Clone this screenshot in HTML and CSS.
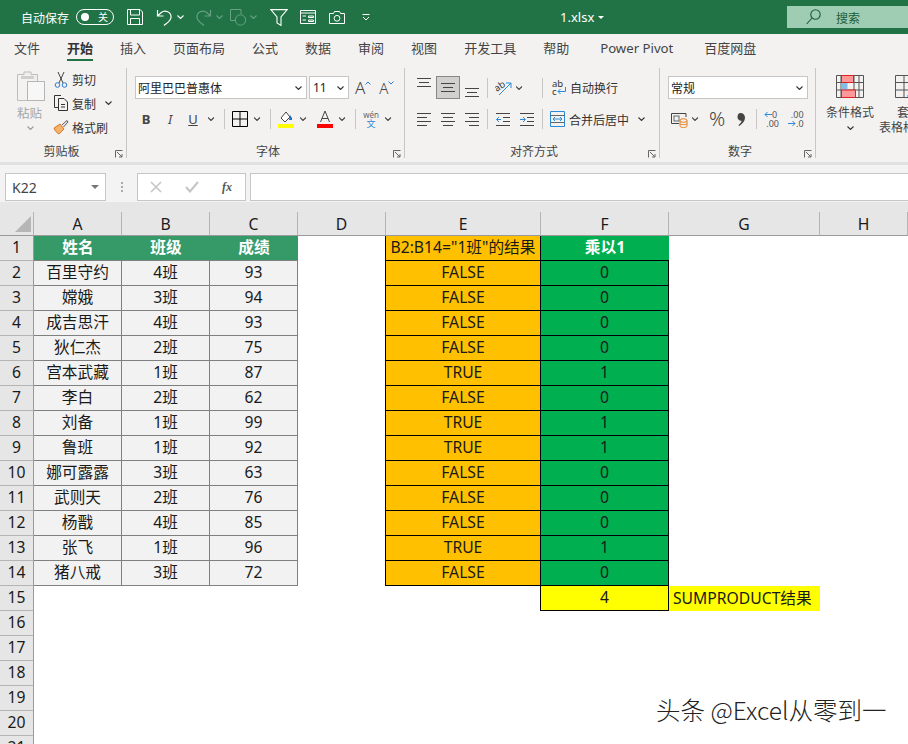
FILE: index.html
```html
<!DOCTYPE html>
<html lang="zh-CN">
<head>
<meta charset="utf-8">
<title>1.xlsx - Excel</title>
<link rel="stylesheet" href="styles.css">
</head>
<body>
<svg class="defs" width="0" height="0" aria-hidden="true">
  <symbol id="chev" viewBox="0 0 7 4"><path d="M.5.5 3.5 3.5 6.5.5" fill="none" stroke="currentColor" stroke-width="1.1"/></symbol>
  <symbol id="launch" viewBox="0 0 8 8"><path d="M.5 7.5V.5H7.5M2 2 7 7M7 4V7H4" fill="none" stroke="#666" stroke-width="1"/></symbol>
</svg>

<header class="titlebar">
  <span class="autosave">自动保存</span>
  <span class="toggle ml7"><i class="dot"></i><b>关</b></span>
  <svg class="ml13" width="16" height="16" viewBox="0 0 16 16" fill="none" stroke="#fff"><path d="M.5.5H13L15.5 3V15.5H.5ZM3.5.5V6H12.5V.5M3.5 15.5V9.5H12.5V15.5"/></svg>
  <svg class="ml13" width="16" height="18" viewBox="0 0 16 18" fill="none" stroke="#fff" stroke-width="1.2"><path d="M1.5 2V8H7.5M1.5 8 5 4.8C9 1.5 15.5 3.8 15 9.5 14.7 13 11 15 8 17.5"/></svg>
  <svg class="ml5 chev7 white"><use href="#chev"/></svg>
  <svg class="ml12" width="16" height="18" viewBox="0 0 16 18" fill="none" stroke="#67a083" stroke-width="1.2"><path d="M14.5 2V8H8.5M14.5 8 11 4.8C7 1.5.5 3.8 1 9.5 1.3 13 5 15 8 17.5"/></svg>
  <svg class="ml4 chev7 dim"><use href="#chev"/></svg>
  <svg class="ml7" width="16" height="17" viewBox="0 0 16 17" fill="none" stroke="#67a083"><path d="M5 11.5H.5V.5H11V5"/><circle cx="10.5" cy="11" r="5.2"/></svg>
  <svg class="ml4 chev7 dim"><use href="#chev"/></svg>
  <svg class="ml13" width="18" height="17" viewBox="0 0 18 17" fill="none" stroke="#fff" stroke-width="1.1"><path d="M.8.6H17.2L11 8V16.4L7 14V8Z"/></svg>
  <svg class="ml12" width="16" height="14" viewBox="0 0 16 14" fill="none" stroke="#fff"><path d="M.5.5H15.5V13.5H.5ZM.5 3H15.5M2.5 6H6M8.5 6H13.5V7.5H8.5ZM2.5 10H6M8.5 10H13.5V11.5H8.5Z"/></svg>
  <svg class="ml13" width="16" height="13" viewBox="0 0 16 13" fill="none" stroke="#fff"><path d="M.5 2.5H4.5L5.5.5H10.5L11.5 2.5H15.5V12.5H.5Z"/><circle cx="8" cy="7.3" r="2.9"/></svg>
  <svg class="ml17" width="8" height="7" viewBox="0 0 8 7" fill="none" stroke="#fff"><path d="M.5.5H7.5M1 3 4 6 7 3"/></svg>
  <span class="filename">1.xlsx</span>
  <i class="caret"></i>
  <div class="search">
    <svg width="15" height="16" viewBox="0 0 15 16" fill="none" stroke="#1c5c3a" stroke-width="1.1"><circle cx="9.5" cy="5.5" r="4.7"/><path d="M6 9 .7 15"/></svg>
    <span>搜索</span>
  </div>
</header>

<nav class="tabs">
  <span class="tab">文件</span>
  <span class="tab active">开始</span>
  <span class="tab">插入</span>
  <span class="tab">页面布局</span>
  <span class="tab">公式</span>
  <span class="tab">数据</span>
  <span class="tab">审阅</span>
  <span class="tab">视图</span>
  <span class="tab">开发工具</span>
  <span class="tab">帮助</span>
  <span class="tab latin">Power Pivot</span>
  <span class="tab latin-after">百度网盘</span>
</nav>

<section class="ribbon">
  <div class="group g-clip">
    <div class="clip-body">
      <div class="paste">
        <svg width="28" height="30" viewBox="0 0 28 30" fill="none"><path d="M.5 3.5H7V1H14V3.5H20.5V10" stroke="#bdbdbd" fill="#efefef"/><path d="M.5 3.5V29.5H10" stroke="#bdbdbd"/><rect x="4" y="5" width="13" height="3" fill="#cfcfcf"/><rect x="10.5" y="10.5" width="17" height="19" fill="#f7f7f7" stroke="#b5b5b5"/></svg>
        <span>粘贴</span>
        <svg class="chev7 gray"><use href="#chev"/></svg>
      </div>
      <div class="clip-list">
        <div class="clip-row">
          <svg width="16" height="17" viewBox="0 0 16 17" fill="none"><path d="M5 1 10 12M11 1 6 12" stroke="#444"/><circle cx="4.5" cy="14" r="2.3" stroke="#2b7cd3"/><circle cx="11.5" cy="14" r="2.3" stroke="#2b7cd3"/></svg>
          <span>剪切</span>
        </div>
        <div class="clip-row">
          <svg width="16" height="16" viewBox="0 0 16 16" fill="none" stroke="#333"><path d="M5 12.5H1.5V.5H8"/><path d="M5.5 3.5H11L14.5 7V15.5H5.5ZM8 9.5H12M8 12H12"/></svg>
          <span>复制</span>
          <svg class="chev7 ml9 dark"><use href="#chev"/></svg>
        </div>
        <div class="clip-row">
          <svg width="16" height="16" viewBox="0 0 16 16" fill="none"><path d="M1 9 7 5 11 10 6 15C4 14 2 12 1 9Z" fill="#f5b26a" stroke="#d9772b"/><path d="M9 6 14 1.5 15 3 10.500 8" stroke="#555"/></svg>
          <span>格式刷</span>
        </div>
      </div>
    </div>
    <div class="group-foot"><span></span><span>剪贴板</span><svg class="launch"><use href="#launch"/></svg></div>
  </div>

  <div class="group g-font">
    <div class="row-top">
      <div class="select font-name"><span>阿里巴巴普惠体</span><svg class="chev7 dark"><use href="#chev"/></svg></div>
      <div class="select font-size"><span>11</span><svg class="chev7 dark"><use href="#chev"/></svg></div>
      <span class="grow">A<svg width="6" height="4" viewBox="0 0 6 4" fill="none" stroke="#2b7cd3"><path d="M.5 3.500 3 1 5.500 3.500"/></svg></span>
      <span class="shrink">A<svg width="6" height="4" viewBox="0 0 6 4" fill="none" stroke="#2b7cd3"><path d="M.5.5 3 3 5.500.5"/></svg></span>
    </div>
    <div class="row-bottom font-tools">
      <span class="btn bold">B</span>
      <span class="btn italic">I</span>
      <span class="btn under">U</span>
      <svg class="chev14"><use href="#chev"/></svg>
      <i class="sep"></i>
      <svg width="16" height="16" viewBox="0 0 16 16" fill="none" stroke="#000"><path d="M.5.5H15.500V15.500H.5ZM8 .5V15.500M.5 8H15.500"/></svg>
      <svg class="chev14 ml2"><use href="#chev"/></svg>
      <i class="sep"></i>
      <svg width="16" height="18" viewBox="0 0 16 18" fill="none"><path d="M3 8 8 2 12 7 7 12Z" stroke="#444" fill="#fff"/><path d="M12 5 14 8V10H11Z" fill="#1f6fc0"/><rect y="14" width="16" height="4" fill="#ffff00"/></svg>
      <svg class="chev14 ml2"><use href="#chev"/></svg>
      <svg class="ml7" width="16" height="18" viewBox="0 0 16 18" fill="none"><path d="M3.500 12 8 1 12.500 12M5 8.500H11" stroke="#444"/><rect y="14" width="16" height="4" fill="#ff0000"/></svg>
      <svg class="chev14 ml2"><use href="#chev"/></svg>
      <i class="sep"></i>
      <span class="wen"><small>wén</small><em>文</em></span>
      <svg class="chev14 ml2"><use href="#chev"/></svg>
    </div>
    <div class="group-foot"><span></span><span>字体</span><svg class="launch"><use href="#launch"/></svg></div>
  </div>

  <div class="group g-align">
    <div class="row-top">
      <span class="al al-top"><svg width="14" height="10" viewBox="0 0 14 10" stroke="#444"><path d="M0 .5H14M2 4.500H12M0 8.500H14"/></svg></span>
      <span class="al selected"><svg width="14" height="10" viewBox="0 0 14 10" stroke="#444"><path d="M0 .5H14M2 4.500H12M0 8.500H14"/></svg></span>
      <span class="al al-bottom"><svg width="14" height="10" viewBox="0 0 14 10" stroke="#444"><path d="M0 .5H14M2 4.500H12M0 8.500H14"/></svg></span>
      <i class="sep s3"></i>
      <svg width="17" height="16" viewBox="0 0 17 16" fill="none"><text x="0" y="10" class="svgtxt" transform="rotate(-35 4 8)">ab</text><path d="M4 15 16 3M11 3H16V8" stroke="#2b8ad8"/></svg>
      <svg class="chev14"><use href="#chev"/></svg>
      <i class="sep s16"></i>
      <span class="wrap"><svg width="15" height="16" viewBox="0 0 15 16" fill="none"><text x="0" y="7" class="svgtxt">ab</text><text x="0" y="15" class="svgtxt">c</text><path d="M13.500 7V11.500H6M8.500 9 6 11.500 8.500 14" stroke="#2b8ad8"/></svg>自动换行</span>
    </div>
    <div class="row-bottom">
      <span class="al"><svg width="14" height="14" viewBox="0 0 14 14" stroke="#444"><path d="M0 1.500H14M0 5.500H10M0 9.500H14M0 13.500H10"/></svg></span>
      <span class="al"><svg width="14" height="14" viewBox="0 0 14 14" stroke="#444"><path d="M0 1.500H14M2 5.500H12M0 9.500H14M2 13.500H12"/></svg></span>
      <span class="al"><svg width="14" height="14" viewBox="0 0 14 14" stroke="#444"><path d="M0 1.500H14M4 5.500H14M0 9.500H14M4 13.500H14"/></svg></span>
      <i class="sep s3 tight"></i>
      <span class="al"><svg width="14" height="14" viewBox="0 0 14 14" fill="none"><path d="M0 1.500H14M7 5.500H14M7 9.500H14M0 13.500H14" stroke="#444"/><path d="M5 7.500H.5M3 5 .5 7.500 3 10" stroke="#2b8ad8"/></svg></span>
      <span class="al"><svg width="14" height="14" viewBox="0 0 14 14" fill="none"><path d="M0 1.500H14M7 5.500H14M7 9.500H14M0 13.500H14" stroke="#444"/><path d="M0 7.500H5M3 5 5.500 7.500 3 10" stroke="#2b8ad8"/></svg></span>
      <i class="sep s3"></i>
      <span class="merge"><svg width="15" height="16" viewBox="0 0 15 16" fill="none"><path d="M.5.5H14.500V15.500H.5Z" stroke="#2b8ad8"/><path d="M.5 4.500H14.500M.5 11.500H14.500" stroke="#666"/><path d="M3 8H12M5 6 3 8 5 10M10 6 12 8 10 10" stroke="#2b8ad8"/></svg>合并后居中</span>
      <svg class="chev7 ml9 dark"><use href="#chev"/></svg>
    </div>
    <div class="group-foot"><span></span><span>对齐方式</span><svg class="launch"><use href="#launch"/></svg></div>
  </div>

  <div class="group g-num">
    <div class="row-top">
      <div class="select num-format"><span>常规</span><svg class="chev7 dark"><use href="#chev"/></svg></div>
    </div>
    <div class="row-bottom num-tools">
      <svg width="17" height="17" viewBox="0 0 17 17" fill="none"><path d="M.5 2.500H15V6M.5 2.500V12.500H8" stroke="#444"/><rect x="3" y="5" width="5" height="5" stroke="#666"/><ellipse cx="12.500" cy="9.500" rx="3.500" ry="1.800" stroke="#e67e22"/><path d="M9 9.500V15C9 17 16 17 16 15V9.500M9 12.500C9 14 16 14 16 12.500" stroke="#e67e22"/></svg>
      <svg class="chev14"><use href="#chev"/></svg>
      <span class="percent">%</span>
      <svg class="comma" width="8" height="13" viewBox="0 0 8 13"><path d="M3.500 0C6 0 8 1.800 8 4.500 8 8 5.500 11 2 13L1.500 12C3.500 10.500 4.500 9 4.500 7.800 2 8 .5 6 .5 4 .5 1.500 1.800 0 3.500 0Z" fill="#444"/></svg>
      <i class="sep s11"></i>
      <span class="dec"><svg width="8" height="7" viewBox="0 0 8 7" fill="none" stroke="#2b8ad8"><path d="M8 3.500H1M3.500 1 1 3.500 3.500 6"/></svg><b>0</b><u>.00</u></span>
      <span class="dec dec2"><u>.00</u><svg width="8" height="7" viewBox="0 0 8 7" fill="none" stroke="#2b8ad8"><path d="M0 3.500H7M4.500 1 7 3.500 4.500 6"/></svg><b>.0</b></span>
    </div>
    <div class="group-foot"><span></span><span>数字</span><svg class="launch"><use href="#launch"/></svg></div>
  </div>

  <div class="g-styles">
    <div class="style-item">
      <svg width="28" height="23" viewBox="0 0 28 23" fill="none"><path d="M.5.500H27.500V22.500H.5ZM.5 7.500H27.500M.5 15H27.500M5 .5V22.500M18 .5V22.500M23 .5V22.500" stroke="#555"/><rect x="5.500" y=".5" width="12" height="7" fill="#ff9999" stroke="#e02020"/><rect x="5.500" y="8" width="6" height="7" fill="#85bdea"/><rect x="5.500" y="15" width="14" height="7.500" fill="#ff9999" stroke="#e02020"/></svg>
      <span>条件格式</span>
      <svg class="chev7 dark"><use href="#chev"/></svg>
    </div>
    <div class="style-item second">
      <svg width="28" height="23" viewBox="0 0 28 23" fill="none"><path d="M.5.500H27.500V22.500H.5ZM.5 7.500H27.500M.5 15H27.500M9 .5V22.500M18 .5V22.500" stroke="#555"/><path d="M13 22 22 13" stroke="#2b8ad8" stroke-width="3"/></svg>
      <span>套用<br>表格格式<i class="line-chev"></i></span>
    </div>
  </div>
</section>

<section class="formula-bar">
  <div class="name-box"><span>K22</span><i class="caret gray-caret"></i></div>
  <span class="grip"><i></i><i></i><i></i></span>
  <div class="fx-box">
    <svg width="12" height="12" viewBox="0 0 12 12" stroke="#c4c4c4" stroke-width="1.500"><path d="M1 1 11 11M11 1 1 11"/></svg>
    <svg width="14" height="12" viewBox="0 0 14 12" fill="none" stroke="#c4c4c4" stroke-width="2"><path d="M1 6 5 10.500 13 1"/></svg>
    <span class="fx">fx</span>
  </div>
  <div class="formula-input"></div>
</section>

<main class="sheet">
<table>
  <colgroup><col class="c-r"><col class="c-a"><col class="c-a"><col class="c-a"><col class="c-a"><col class="c-e"><col class="c-f"><col class="c-g"><col class="c-h"></colgroup>
  <thead>
    <tr><th class="corner"><svg width="16" height="16" viewBox="0 0 16 16"><path d="M16 0V16H0Z" fill="#b6b6b6"/></svg></th><th>A</th><th>B</th><th>C</th><th>D</th><th>E</th><th>F</th><th>G</th><th>H</th></tr>
  </thead>
  <tbody>
    <tr><th>1</th><td class="hd">姓名</td><td class="hd">班级</td><td class="hd">成绩</td><td></td><td class="o">B2:B14="1班"的结果</td><td class="g gh">乘以1</td><td></td><td></td></tr>
    <tr><th>2</th><td class="n">百里守约</td><td class="n">4班</td><td class="n">93</td><td></td><td class="o">FALSE</td><td class="g">0</td><td></td><td></td></tr>
    <tr><th>3</th><td class="n">嫦娥</td><td class="n">3班</td><td class="n">94</td><td></td><td class="o">FALSE</td><td class="g">0</td><td></td><td></td></tr>
    <tr><th>4</th><td class="n">成吉思汗</td><td class="n">4班</td><td class="n">93</td><td></td><td class="o">FALSE</td><td class="g">0</td><td></td><td></td></tr>
    <tr><th>5</th><td class="n">狄仁杰</td><td class="n">2班</td><td class="n">75</td><td></td><td class="o">FALSE</td><td class="g">0</td><td></td><td></td></tr>
    <tr><th>6</th><td class="n">宫本武藏</td><td class="n">1班</td><td class="n">87</td><td></td><td class="o">TRUE</td><td class="g">1</td><td></td><td></td></tr>
    <tr><th>7</th><td class="n">李白</td><td class="n">2班</td><td class="n">62</td><td></td><td class="o">FALSE</td><td class="g">0</td><td></td><td></td></tr>
    <tr><th>8</th><td class="n">刘备</td><td class="n">1班</td><td class="n">99</td><td></td><td class="o">TRUE</td><td class="g">1</td><td></td><td></td></tr>
    <tr><th>9</th><td class="n">鲁班</td><td class="n">1班</td><td class="n">92</td><td></td><td class="o">TRUE</td><td class="g">1</td><td></td><td></td></tr>
    <tr><th>10</th><td class="n">娜可露露</td><td class="n">3班</td><td class="n">63</td><td></td><td class="o">FALSE</td><td class="g">0</td><td></td><td></td></tr>
    <tr><th>11</th><td class="n">武则天</td><td class="n">2班</td><td class="n">76</td><td></td><td class="o">FALSE</td><td class="g">0</td><td></td><td></td></tr>
    <tr><th>12</th><td class="n">杨戬</td><td class="n">4班</td><td class="n">85</td><td></td><td class="o">FALSE</td><td class="g">0</td><td></td><td></td></tr>
    <tr><th>13</th><td class="n">张飞</td><td class="n">1班</td><td class="n">96</td><td></td><td class="o">TRUE</td><td class="g">1</td><td></td><td></td></tr>
    <tr><th>14</th><td class="n">猪八戒</td><td class="n">3班</td><td class="n">72</td><td></td><td class="o">FALSE</td><td class="g">0</td><td></td><td></td></tr>
    <tr><th>15</th><td></td><td></td><td></td><td></td><td></td><td class="y">4</td><td class="yl">SUMPRODUCT结果</td><td></td></tr>
    <tr><th>16</th><td></td><td></td><td></td><td></td><td></td><td></td><td></td><td></td></tr>
    <tr><th>17</th><td></td><td></td><td></td><td></td><td></td><td></td><td></td><td></td></tr>
    <tr><th>18</th><td></td><td></td><td></td><td></td><td></td><td></td><td></td><td></td></tr>
    <tr><th>19</th><td></td><td></td><td></td><td></td><td></td><td></td><td></td><td></td></tr>
    <tr><th>20</th><td></td><td></td><td></td><td></td><td></td><td></td><td></td><td></td></tr>
    <tr><th>21</th><td></td><td></td><td></td><td></td><td></td><td></td><td></td><td></td></tr>
  </tbody>
</table>
<div class="watermark">头条 @Excel从零到一</div>
</main>
</body>
</html>
```

FILE: styles.css
```css
* { box-sizing: border-box; }
html, body { margin: 0; height: 744px; overflow: hidden; background: #fff; }
body { width: 908px; font-family: "Noto Sans CJK SC", "Noto Sans", sans-serif; color: #333; position: relative; }
.defs { position: absolute; }
i, em { font-style: normal; }
svg { flex: none; display: block; }

.ml2 { margin-left: 2px; }
.ml4 { margin-left: 4px; }
.ml5 { margin-left: 5px; }
.ml7 { margin-left: 7px; }
.ml9 { margin-left: 9px; }
.ml12 { margin-left: 12px; }
.ml13 { margin-left: 13px; }
.ml17 { margin-left: 17px; }

.chev7 { width: 7px; height: 4px; }
.chev14 { width: 14px; height: 4px; padding: 0 3.5px; color: #444; }
.white { color: #fff; }
.dim { color: #67a083; }
.gray { color: #999; }
.dark { color: #333; }

/* title bar */
.titlebar { height: 34px; background: #217346; display: flex; align-items: center; padding-left: 21px; color: #fff; }
.autosave { font-size: 12px; width: 48px; white-space: nowrap; }
.toggle { width: 38px; height: 16px; border: 1px solid #fff; border-radius: 8px; display: flex; align-items: center; justify-content: space-between; padding: 0 5px 0 4px; }
.toggle .dot { width: 8px; height: 8px; border-radius: 50%; background: #fff; }
.toggle b { font-weight: 400; font-size: 10px; line-height: 14px; }
.filename { font-size: 13px; margin-left: 190px; font-family: "Noto Sans", sans-serif; width: 38px; }
.caret { width: 0; height: 0; border: 3px solid transparent; border-top: 3px solid #fff; border-bottom: 0; }
.search { margin-left: auto; align-self: flex-start; margin-top: 6px; width: 121px; height: 22px; background: #9fcdb3; display: flex; align-items: center; padding-left: 19px; color: #1c5c3a; font-size: 12px; }
.search span { margin-left: 15px; }

/* tabs */
.tabs { height: 31px; background: #f3f2f1; display: flex; gap: 27px; padding-left: 14px; }
.tab { height: 27px; padding-top: 4px; line-height: 19px; font-size: 13px; color: #444; border-bottom: 2px solid transparent; white-space: nowrap; }
.tab.active { font-weight: 700; color: #333; border-bottom-color: #217346; }
.tab.latin { margin-left: 4px; padding-top: 5px; font-family: "Noto Sans", sans-serif; font-size: 13.200px; }
.tab.latin-after { margin-left: 4px; }

/* ribbon */
.ribbon { height: 97px; background: #f3f2f1; display: flex; padding: 3px 0 4px; overflow: hidden; }
.group { height: 90px; border-right: 1px solid #c8c6c4; display: flex; flex-direction: column; flex: none; }
.group-foot { margin-top: auto; height: 15px; display: grid; grid-template-columns: 1fr auto 1fr; align-items: center; font-size: 12px; color: #444; line-height: 13px; padding-right: 3px; }
.launch { width: 8px; height: 8px; justify-self: end; margin-top: 7px; }
.g-clip { width: 127px; }
.g-font { width: 278px; padding-left: 8px; }
.g-align { width: 255px; padding-left: 7px; }
.g-num { width: 156px; padding-left: 8px; }

.clip-body { display: flex; padding-left: 17px; }
.paste { width: 28px; display: flex; flex-direction: column; padding-top: 3px; font-size: 12.500px; color: #a6a6a6; white-space: nowrap; line-height: 18px; }
.paste span { margin-top: 3px; }
.paste .chev7 { margin: 4px 0 0 10px; }
.clip-list { margin-left: 8px; margin-top: -1px; }
.clip-row { height: 24px; display: flex; align-items: center; font-size: 12px; color: #333; }
.clip-row span { margin-left: 3px; }

.row-top { display: flex; align-items: center; height: 23px; margin-top: 8px; }
.row-bottom { display: flex; align-items: center; height: 18px; margin-top: 11px; }
.select { height: 23px; background: #fff; border: 1px solid #c6c6c6; display: flex; align-items: center; justify-content: space-between; padding: 0 4px 0 2px; font-size: 12px; color: #222; }
.font-name { width: 172px; }
.font-size { width: 40px; margin-left: 2px; font-family: "Noto Sans", sans-serif; padding-left: 3px; }
.num-format { width: 140px; }
.grow, .shrink { display: flex; align-items: flex-start; line-height: 20px; color: #444; font-family: "Noto Sans", sans-serif; font-weight: 300; }
.grow { margin-left: 6px; font-size: 17px; }
.shrink { margin-left: 8px; font-size: 15px; }
.grow svg, .shrink svg { margin-top: 3px; }

.font-tools { margin-left: -1px; }
.btn { width: 24px; text-align: center; font-family: "Noto Sans", sans-serif; font-size: 13px; color: #444; line-height: 18px; }
.btn.bold { font-weight: 700; }
.btn.italic { font-style: italic; }
.btn.under { width: 22px; text-decoration: underline; }
.sep { width: 1px; height: 20px; background: #c8c6c4; margin: 0 7px 0 6px; flex: none; }
.sep.s3 { margin-left: 3px; }
.sep.tight { margin-right: 3px; }
.sep.s16 { margin-left: 16px; margin-right: 9px; }
.sep.s11 { margin-left: 11px; }
.wen { width: 16px; display: flex; flex-direction: column; align-items: center; line-height: 9px; }
.wen small { font-size: 8px; color: #666; font-family: "Noto Sans", sans-serif; }
.wen em { font-size: 9px; color: #2b8ad8; }
.svgtxt { font-family: "Noto Sans", sans-serif; font-size: 9.500px; fill: #333; }

.al { width: 24px; height: 23px; display: flex; align-items: center; justify-content: center; flex: none; }
.row-bottom .al { height: 18px; }
.al.selected { background: #d2d0ce; border: 1px solid #8a8886; }
.al-top { align-items: flex-start; padding-top: 2px; }
.al-bottom { align-items: flex-end; padding-bottom: 1px; }
.wrap, .merge { display: flex; align-items: center; font-size: 12px; color: #333; white-space: nowrap; }
.wrap svg { margin-right: 3px; }
.merge svg { margin-right: 4px; }

.num-tools { padding-left: 3px; }
.percent { margin-left: 7px; font-size: 20px; width: 16px; font-family: "Noto Sans", sans-serif; font-weight: 300; color: #444; line-height: 18px; }
.comma { margin-left: 12px; width: 8px; }
.dec { width: 15px; font-size: 9px; line-height: 9px; font-family: "Noto Sans", sans-serif; color: #555; display: grid; grid-template-columns: 8px auto; margin-right: 9px; }
.dec svg { margin-top: 1px; }
.dec b, .dec u { font-weight: 400; text-decoration: none; }
.dec u { grid-column: 1 / 3; text-align: right; }
.dec2 u { grid-row: 1; }

.g-styles { display: flex; padding: 7px 0 0 10px; flex: none; width: 92px; overflow: hidden; }
.style-item { width: 48px; flex: none; display: flex; flex-direction: column; align-items: center; font-size: 12px; color: #444; line-height: 15px; text-align: center; }
.style-item span { margin: 6px 0 7px; white-space: nowrap; }
.style-item.second { width: 60px; margin-left: 5px; }
.style-item.second svg { align-self: flex-start; margin-left: 16px; }
.line-chev { display: inline-block; width: 12px; }

/* formula bar */
.formula-bar { height: 40px; background: #f3f3f3; border-top: 3px solid #e1e1e1; display: flex; align-items: flex-start; padding: 8px 0 0 5px; }
.name-box { width: 101px; height: 28px; background: #fff; border: 1px solid #c6c6c6; display: flex; align-items: center; justify-content: space-between; padding: 0 6px; font: 14px "Noto Sans", sans-serif; color: #444; }
.gray-caret { border-width: 4px; border-top-color: #777; border-bottom: 0; }
.grip { width: 31px; display: flex; flex-direction: column; align-items: center; gap: 2px; padding-top: 9px; }
.grip i { width: 2px; height: 2px; background: #aaa; }
.fx-box { width: 109px; height: 28px; background: #fff; border: 1px solid #c6c6c6; display: flex; align-items: center; padding-left: 12px; gap: 23px; }
.fx { font: italic 700 12px "Liberation Serif", serif; color: #555; }
.formula-input { flex: 1; height: 28px; margin-left: 4px; background: #fff; border: 1px solid #c6c6c6; border-right: 0; }

/* sheet */
.sheet { background: #e6e6e6; padding-top: 10px; height: 542px; overflow: hidden; }
table { border-collapse: separate; border-spacing: 0; table-layout: fixed; width: 908px; font: 15.700px "Noto Sans", "Noto Sans CJK SC", sans-serif; color: #1a1a1a; }
.c-r { width: 34px; }
.c-a { width: 88px; }
.c-e { width: 155px; }
.c-f { width: 128px; }
.c-g { width: 151px; }
.c-h { width: 88px; }
th { background: #e6e6e6; font-weight: 400; padding: 0 0 2px; text-align: center; border-right: 1px solid #b4b4b4; border-bottom: 1px solid #b4b4b4; line-height: 20px; }
thead th { height: 24px; padding-bottom: 0; border-bottom-color: #9a9a9a; }
tbody th { border-right-color: #9a9a9a; }
.corner { padding: 0 3px 0 15px; }
td { height: 25px; padding: 0 0 2px; text-align: center; background: #fff; line-height: 20px; white-space: nowrap; overflow: hidden; }
.hd { background: #359a68; color: #fff; font-weight: 700; border-bottom: 1px solid #808080; font-family: "Noto Sans CJK SC", sans-serif; }
.n { background: #f2f2f2; border-right: 1px solid #808080; border-bottom: 1px solid #808080; }
.o { background: #ffc000; border-right: 1px solid #000; border-bottom: 1px solid #000; box-shadow: -1px 0 0 #000; }
.g { background: #00b050; border-right: 1px solid #000; border-bottom: 1px solid #000; }
.gh { color: #fff; font-weight: 700; border-right: 0; }
.y { background: #ffff00; border-right: 1px solid #000; border-bottom: 1px solid #000; box-shadow: -1px 0 0 #000; }
.yl { background: #ffff00; text-align: left; padding-left: 4px; }
.watermark { position: absolute; left: 656px; top: 696px; font: 300 24.500px/28px "Noto Sans CJK SC", "Noto Sans", sans-serif; color: #222; white-space: nowrap; text-shadow: 0 0 1px #fff; }
```
